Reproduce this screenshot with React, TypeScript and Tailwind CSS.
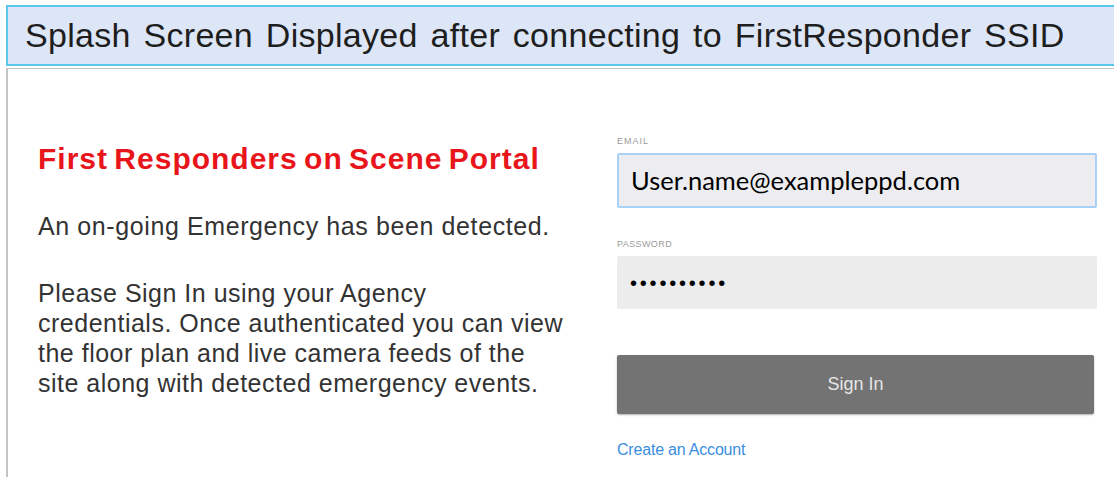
export default function App() {
  return (
    <div className="h-[477px] w-[1114px] overflow-hidden bg-white font-[family-name:Liberation_Sans,Arial,sans-serif]">
      {/* title bar */}
      <div className="ml-[6px] mt-[5px] flex h-[61px] w-[1112px] items-center border-2 border-r-0 border-[#5cc7ec] bg-[#dde6f6] pl-[17px] text-[34px] tracking-[0.3px] text-[#1e1e1e] [word-spacing:3px]">
        Splash Screen Displayed after connecting to FirstResponder SSID
      </div>

      {/* portal page */}
      <div className="ml-[6px] mt-[2px] flex h-[420px] border-l-2 border-t border-[#c4c4c4]">
        <div className="w-[609px] pl-[30px] pt-[75px] text-[#333]">
          <h1 className="text-[30px] font-bold leading-[30px] tracking-[1px] text-[#e8161b] [word-spacing:-3px]">
            First Responders on Scene Portal
          </h1>
          <p className="mt-[37px] text-[25px] leading-[30px] tracking-[0.6px]">
            An on-going Emergency has been detected.
          </p>
          <p className="mt-[37px] text-[25px] leading-[30px] tracking-[0.5px]">
            Please Sign In using your Agency
            <br />
            credentials. Once authenticated you can view
            <br />
            the floor plan and live camera feeds of the
            <br />
            site along with detected emergency events.
          </p>
        </div>

        <div className="w-[480px] pt-[66px]">
          <div className="text-[9px] tracking-[1px] text-[#9a9a9a]">EMAIL</div>
          <div className="mt-[4px] flex h-[55px] items-center rounded-[2px] border-2 border-[#a9d0f7] bg-[#ededf1] pl-[12px] font-[family-name:Lato,sans-serif] text-[25.5px] text-black">
            User.name@exampleppd.com
          </div>
          <div className="mt-[30px] text-[9px] tracking-[0.4px] text-[#9a9a9a]">PASSWORD</div>
          <div className="mt-[5px] flex h-[53px] items-center rounded-[2px] bg-[#ececec] pl-[13px] text-[20px] tracking-[2.8px] text-black">
            ••••••••••
          </div>
          <button className="mt-[46px] flex h-[59px] w-[477px] items-center justify-center rounded-[2px] bg-[#737373] text-[18px] text-[#e6e6e6] shadow-[0_1px_2px_rgba(0,0,0,0.3)]">
            Sign In
          </button>
          <a className="mt-[24px] block text-[16px] tracking-[-0.2px] text-[#3a8ee0]" href="#">
            Create an Account
          </a>
        </div>
      </div>
    </div>
  );
}
